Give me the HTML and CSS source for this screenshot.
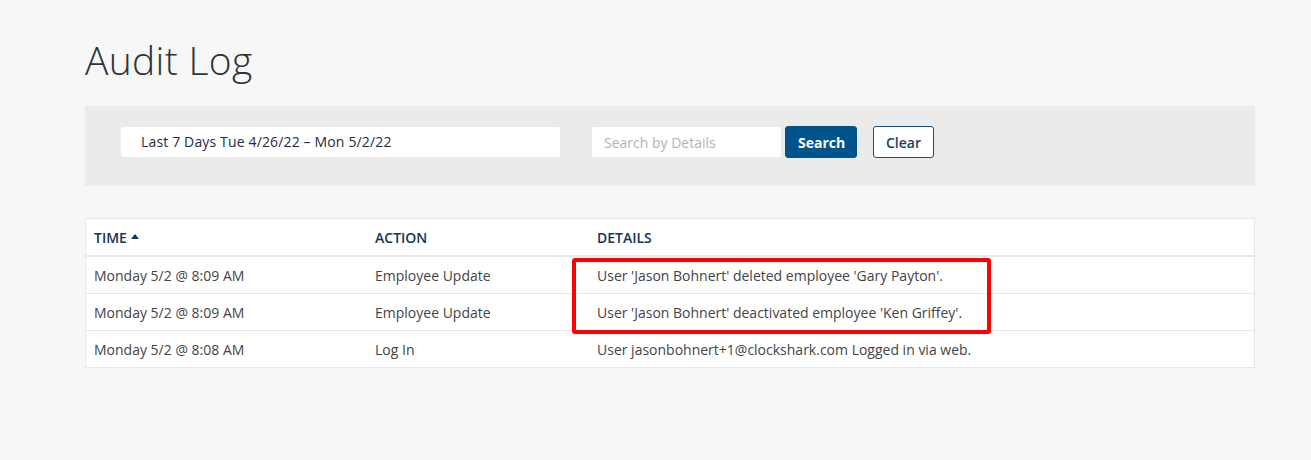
FILE: index.html
```html
<!DOCTYPE html>
<html>
<head>
<meta charset="utf-8">
<link rel="stylesheet" href="styles.css">
</head>
<body>
<div class="page">
  <h1 class="title">Audit Log</h1>
  <div class="filters">
    <div class="date-range">Last 7 Days Tue 4/26/22 – Mon 5/2/22</div>
    <div class="search-group">
      <input class="search-input" type="text" placeholder="Search by Details">
      <button class="btn btn-primary">Search</button>
      <button class="btn btn-outline">Clear</button>
    </div>
  </div>
  <div class="table-wrap">
    <table class="log">
      <thead>
        <tr>
          <th class="col-time">TIME <span class="caret"></span></th>
          <th class="col-action">ACTION</th>
          <th>DETAILS</th>
        </tr>
      </thead>
      <tbody>
        <tr><td>Monday 5/2 @ 8:09 AM</td><td>Employee Update</td><td>User 'Jason Bohnert' deleted employee 'Gary Payton'.</td></tr>
        <tr><td>Monday 5/2 @ 8:09 AM</td><td>Employee Update</td><td>User 'Jason Bohnert' deactivated employee 'Ken Griffey'.</td></tr>
        <tr><td>Monday 5/2 @ 8:08 AM</td><td>Log In</td><td>User jasonbohnert+1@clockshark.com Logged in via web.</td></tr>
      </tbody>
    </table>
    <div class="highlight"></div>
  </div>
</div>
</body>
</html>
```
FILE: styles.css
```css
html, body {
  margin: 0;
  padding: 0;
  background: #f7f7f7;
  font-family: "Open Sans", "Noto Sans", sans-serif;
  color: #333;
}
.page {
  padding: 33px 56px 0 85px;
}
.title {
  margin: 0;
  font-weight: 300;
  font-size: 39px;
  line-height: 54px;
  color: #2d3338;
  letter-spacing: 0.3px;
}
.filters {
  margin-top: 19px;
  height: 80px;
  background: #ebebeb;
  display: flex;
  align-items: flex-start;
  padding: 21px 0 0 36px;
  box-sizing: border-box;
}
.date-range {
  width: 439px;
  height: 30px;
  background: #fff;
  border-radius: 2px;
  box-sizing: border-box;
  padding-left: 20px;
  font-size: 14px;
  line-height: 30px;
  color: #1f2d3d;
  letter-spacing: 0.15px;
}
.search-group {
  display: flex;
  align-items: center;
  margin-left: 32px;
  margin-top: -1px;
}
.search-input {
  width: 189px;
  height: 30px;
  border: none;
  border-radius: 2px;
  background: #fff;
  box-sizing: border-box;
  padding: 0 12px;
  font-family: "Open Sans", sans-serif;
  font-size: 14px;
  color: #333;
  outline: none;
}
.search-input::placeholder {
  color: #b3b3b3;
}
.btn {
  height: 32px;
  box-sizing: border-box;
  border-radius: 3px;
  font-family: "Open Sans", sans-serif;
  font-size: 14px;
  padding: 0 12px;
  cursor: pointer;
}
.btn-primary {
  margin-left: 4px;
  width: 72px;
  background: #00548c;
  border: 1px solid #00548c;
  color: #fff;
  font-weight: 700;
}
.btn-outline {
  margin-left: 16px;
  width: 61px;
  background: #fff;
  border: 1px solid #1d4d74;
  color: #1d3f5c;
  font-weight: 600;
}
.table-wrap {
  position: relative;
  margin-top: 32px;
}
.log {
  width: 100%;
  border-collapse: collapse;
  background: #fff;
  border: 1px solid #e8e8e8;
  font-size: 14px;
}
.log th {
  text-align: left;
  font-weight: 600;
  color: #163352;
  height: 36px;
  padding: 0 8px;
  border-bottom: 2px solid #e8e8e8;
  font-size: 14px;
}
.log td {
  height: 36px;
  padding: 0 8px;
  border-bottom: 1px solid #e8e8e8;
  color: #444;
}
.col-time { width: 265px; }
.col-action { width: 206px; }
.caret {
  display: inline-block;
  width: 0;
  height: 0;
  border-left: 4px solid transparent;
  border-right: 4px solid transparent;
  border-bottom: 5px solid #163352;
  vertical-align: middle;
  margin-left: 0;
  position: relative;
  top: -2px;
}
.highlight {
  position: absolute;
  left: 487px;
  top: 40px;
  width: 419px;
  height: 76px;
  border: 4px solid #ff0000;
  border-radius: 3px;
  box-sizing: border-box;
}
```
